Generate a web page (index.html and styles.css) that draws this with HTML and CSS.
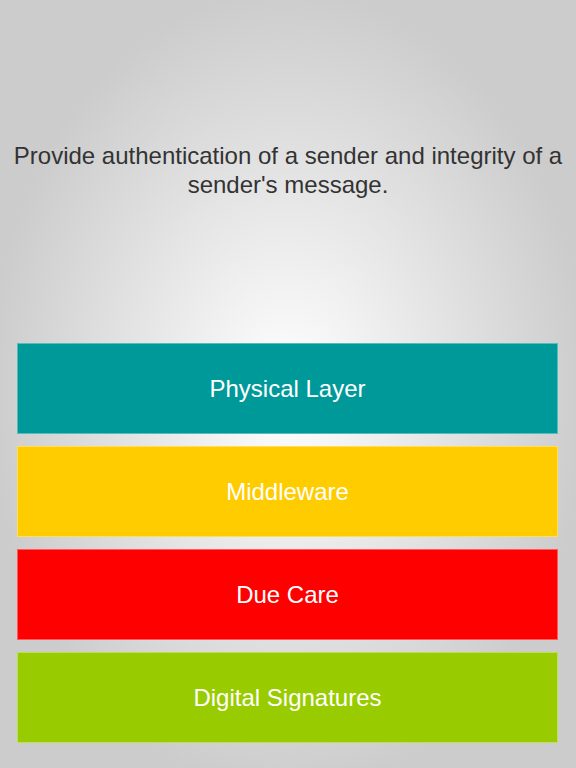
FILE: index.html
```html
<!DOCTYPE html>
<html lang="en">
<head>
  <meta charset="UTF-8" />
  <meta name="viewport" content="width=device-width, initial-scale=1.0"/>
  <title>Quiz</title>
  <link rel="stylesheet" href="styles.css">
</head>
<body>

<main class="quiz">
  <!-- Question -->
  <section class="question">
    <p>Provide authentication of a sender and integrity of a sender's message.</p>
  </section>

  <!-- Answers -->
  <section class="answers">
    <button class="answer teal">Physical Layer</button>
    <button class="answer yellow">Middleware</button>
    <button class="answer red">Due Care</button>
    <button class="answer green">Digital Signatures</button>
  </section>
</main>

</body>
</html>
```

FILE: styles.css
```css
* {
  box-sizing: border-box;
}

html, body {
  height: 100%;
}

body {
  margin: 0;
  font-family: "Liberation Sans", Arial, sans-serif;
  background: #cccccc radial-gradient(ellipse 300px 400px at 288px 390px, #ffffff 0%, #cccccc 100%) no-repeat;
}

.quiz {
  display: flex;
  flex-direction: column;
  height: 768px;
}

.question {
  height: 343px;
  display: flex;
  align-items: center;
  justify-content: center;
  padding: 0 10px 4px;
}

.question p {
  margin: 0;
  text-align: center;
  font-size: 24px;
  line-height: 29px;
  color: #333333;
}

.answers {
  display: flex;
  flex-direction: column;
  gap: 12px;
  padding: 0 18px 0 17px;
}

.answer {
  height: 91px;
  padding-top: 1px;
  border: 1px solid rgba(255, 255, 255, 0.35);
  font-family: "Liberation Sans", Arial, sans-serif;
  font-size: 24px;
  color: white;
  cursor: pointer;
}

.teal { background: #009999; }
.yellow { background: #ffcc00; }
.red { background: #ff0000; }
.green { background: #99cc00; }
```
